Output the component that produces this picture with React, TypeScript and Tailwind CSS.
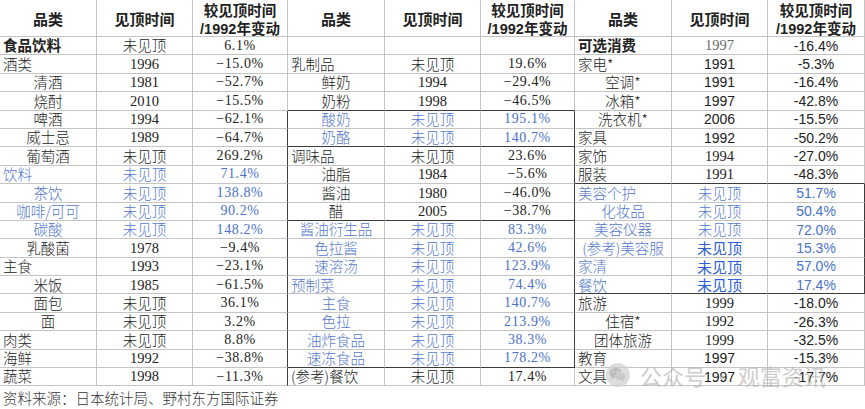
import React from "react";

type Row = {
  n: string;
  a: "l" | "c";
  y: string;
  p: string;
  b?: boolean; // blue
  bold?: boolean;
  yf?: "serif" | "sans" | "cjk" | "cjkbold" | "serifgray";
};

const M = "\u2212";

const g1: Row[] = [
  { n: "食品饮料", a: "l", y: "未见顶", p: "6.1%", bold: true },
  { n: "酒类", a: "l", y: "1996", p: M + "15.0%" },
  { n: "清酒", a: "c", y: "1981", p: M + "52.7%" },
  { n: "烧酎", a: "c", y: "2010", p: M + "15.5%" },
  { n: "啤酒", a: "c", y: "1994", p: M + "62.1%" },
  { n: "威士忌", a: "c", y: "1989", p: M + "64.7%" },
  { n: "葡萄酒", a: "c", y: "未见顶", p: "269.2%" },
  { n: "饮料", a: "l", y: "未见顶", p: "71.4%", b: true },
  { n: "茶饮", a: "c", y: "未见顶", p: "138.8%", b: true },
  { n: "咖啡/可可", a: "c", y: "未见顶", p: "90.2%", b: true },
  { n: "碳酸", a: "c", y: "未见顶", p: "148.2%", b: true },
  { n: "乳酸菌", a: "c", y: "1978", p: M + "9.4%" },
  { n: "主食", a: "l", y: "1993", p: M + "23.1%" },
  { n: "米饭", a: "c", y: "1985", p: M + "61.5%" },
  { n: "面包", a: "c", y: "未见顶", p: "36.1%" },
  { n: "面", a: "c", y: "未见顶", p: "3.2%" },
  { n: "肉类", a: "l", y: "未见顶", p: "8.8%" },
  { n: "海鲜", a: "l", y: "1992", p: M + "38.8%" },
  { n: "蔬菜", a: "l", y: "1998", p: M + "11.3%" },
];

const g2: Row[] = [
  { n: "", a: "l", y: "", p: "" },
  { n: "乳制品", a: "l", y: "未见顶", p: "19.6%" },
  { n: "鲜奶", a: "c", y: "1994", p: M + "29.4%" },
  { n: "奶粉", a: "c", y: "1998", p: M + "46.5%" },
  { n: "酸奶", a: "c", y: "未见顶", p: "195.1%", b: true },
  { n: "奶酪", a: "c", y: "未见顶", p: "140.7%", b: true },
  { n: "调味品", a: "l", y: "未见顶", p: "23.6%" },
  { n: "油脂", a: "c", y: "1984", p: M + "5.6%" },
  { n: "酱油", a: "c", y: "1980", p: M + "46.0%" },
  { n: "醋", a: "c", y: "2005", p: M + "38.7%" },
  { n: "酱油衍生品", a: "c", y: "未见顶", p: "83.3%", b: true },
  { n: "色拉酱", a: "c", y: "未见顶", p: "42.6%", b: true },
  { n: "速溶汤", a: "c", y: "未见顶", p: "123.9%", b: true },
  { n: "预制菜", a: "l", y: "未见顶", p: "74.4%", b: true },
  { n: "主食", a: "c", y: "未见顶", p: "140.7%", b: true },
  { n: "色拉", a: "c", y: "未见顶", p: "213.9%", b: true },
  { n: "油炸食品", a: "c", y: "未见顶", p: "38.3%", b: true },
  { n: "速冻食品", a: "c", y: "未见顶", p: "178.2%", b: true },
  { n: "(参考)餐饮", a: "l", y: "未见顶", p: "17.4%" },
];

const g3: Row[] = [
  { n: "可选消费", a: "l", y: "1997", p: "-16.4%", bold: true, yf: "serifgray" },
  { n: "家电*", a: "l", y: "1991", p: "-5.3%", yf: "sans" },
  { n: "空调*", a: "c", y: "1991", p: "-16.4%", yf: "sans" },
  { n: "冰箱*", a: "c", y: "1997", p: "-42.8%", yf: "sans" },
  { n: "洗衣机*", a: "c", y: "2006", p: "-15.5%", yf: "sans" },
  { n: "家具", a: "l", y: "1992", p: "-50.2%", yf: "sans" },
  { n: "家饰", a: "l", y: "1994", p: "-27.0%", yf: "serif" },
  { n: "服装", a: "l", y: "1991", p: "-48.3%", yf: "serif" },
  { n: "美容个护", a: "l", y: "未见顶", p: "51.7%", b: true, yf: "cjk" },
  { n: "化妆品", a: "c", y: "未见顶", p: "50.4%", b: true, yf: "cjk" },
  { n: "美容仪器", a: "c", y: "未见顶", p: "72.0%", b: true, yf: "cjk" },
  { n: "(参考)美容服", a: "c", y: "未见顶", p: "15.3%", b: true, yf: "cjkbold" },
  { n: "家清", a: "l", y: "未见顶", p: "57.0%", b: true, yf: "cjkbold" },
  { n: "餐饮", a: "l", y: "未见顶", p: "17.4%", b: true, yf: "cjkbold" },
  { n: "旅游", a: "l", y: "1999", p: "-18.0%", yf: "serif" },
  { n: "住宿*", a: "c", y: "1992", p: "-26.3%", yf: "serif" },
  { n: "团体旅游", a: "c", y: "1999", p: "-32.5%", yf: "serif" },
  { n: "教育", a: "l", y: "1997", p: "-15.3%", yf: "sans" },
  { n: "文具", a: "l", y: "1997", p: "-17.7%", yf: "sans" },
];

const groups = [g1, g2, g3];

const boxes: number[][][] = [
  [],
  [
    [4, 5],
    [10, 17],
  ],
  [[8, 13]],
];

function inBox(g: number, r: number) {
  return boxes[g].some(([a, b]) => r >= a && r <= b);
}

function rightDark(g: number, r: number) {
  if (g === 0) return r >= 4;
  if (g === 1) return r >= 4 && r <= 17;
  return r >= 8 && r <= 13;
}

function Cell({
  children,
  align,
  rd,
  bd,
  className,
}: {
  children?: React.ReactNode;
  align: "l" | "c";
  rd: boolean;
  bd: boolean;
  className?: string;
}) {
  return (
    <div
      className={[
        "flex items-center whitespace-nowrap leading-none border-r border-b",
        align === "l" ? "justify-start pl-[3px]" : "justify-center",
        rd ? "border-r-[#3c3c3c]" : "border-r-[#c4c4c4]",
        bd ? "border-b-[#3c3c3c]" : "border-b-[#c4c4c4]",
        className ?? "",
      ].join(" ")}
    >
      {children}
    </div>
  );
}

function Header() {
  return (
    <>
      <Cell align="c" rd={false} bd={false} className="font-bold text-[15px] pt-[1px]">
        品类
      </Cell>
      <Cell align="c" rd={false} bd={false} className="font-bold text-[15px] pt-[1px]">
        见顶时间
      </Cell>
      <Cell align="c" rd={false} bd={false} className="font-bold text-[14.5px]">
        <div className="flex flex-col items-center leading-[18px] pt-[2px]">
          <span>较见顶时间</span>
          <span>
            <span className="font-['Liberation_Sans',Arial,sans-serif]">/1992</span>年变动
          </span>
        </div>
      </Cell>
    </>
  );
}

const CJK = "font-['Noto_Sans_CJK_SC','Noto_Sans_CJK_JP',sans-serif]";

function yearClass(row: Row) {
  const color = row.b ? (row.yf === "cjkbold" ? "text-[#2f5fd2]" : "text-[#5478cc]") : "text-[#222]";
  if (row.yf === "cjkbold") return `${color} text-[15px] font-normal`;
  if (row.y === "未见顶") return `${color} text-[14.5px] font-light`;
  if (row.yf === "sans") return `${color} text-[14px] font-['Liberation_Sans',Arial,sans-serif]`;
  if (row.yf === "serifgray") return `text-[#6a6a6a] text-[14.5px] font-['Liberation_Serif',serif]`;
  return `${color} text-[14.5px] font-['Liberation_Serif',serif]`;
}

function pctClass(row: Row, g: number) {
  const color = row.b ? "text-[#4a72cc]" : "text-[#222]";
  if (g === 2) return `${color} text-[14px] font-['Liberation_Sans',Arial,sans-serif]`;
  return `${color} text-[14px] tracking-[0.6px] font-['Liberation_Serif',serif]`;
}

function WeChatIcon() {
  return (
    <svg width="24" height="24" viewBox="0 0 24 24">
      <circle cx="12" cy="12" r="12" fill="#cfcfcf" />
      <ellipse cx="9.6" cy="10" rx="6" ry="4.9" fill="#9e9e9e" />
      <path d="M5.6 13.6 L5 16.2 L8 14.6 Z" fill="#9e9e9e" />
      <ellipse cx="14.6" cy="13.6" rx="5" ry="4.1" fill="#b0b0b0" stroke="#cfcfcf" strokeWidth="0.8" />
      <path d="M17.6 16.6 L18.6 18.8 L15.8 17.4 Z" fill="#b0b0b0" />
      <circle cx="7.5" cy="8.8" r="0.8" fill="#e8e8e8" />
      <circle cx="11.5" cy="8.8" r="0.8" fill="#e8e8e8" />
      <circle cx="13" cy="12.8" r="0.65" fill="#e8e8e8" />
      <circle cx="16.3" cy="12.8" r="0.65" fill="#e8e8e8" />
    </svg>
  );
}

export default function App() {
  return (
    <div className={`relative w-[865px] h-[409px] overflow-hidden bg-white text-[#222] ${CJK}`}>
      <div className="grid grid-cols-[97px_96px_95px_97px_96px_94px_97px_96px_97px] grid-rows-[37px_repeat(19,18.4px)]">
        {groups.map((_, g) => (
          <Header key={"h" + g} />
        ))}
        {Array.from({ length: 19 }).map((_, r) =>
          groups.map((grp, g) => {
            const row = grp[r];
            const bd = inBox(g, r) !== inBox(g, r + 1);
            const nameColor = row.b ? "text-[#5478cc]" : "text-[#222]";
            return (
              <React.Fragment key={`${r}-${g}`}>
                <Cell
                  align={row.a}
                  rd={false}
                  bd={bd}
                  className={`${nameColor} text-[14.5px] ${row.bold ? "font-bold" : "font-light"}`}
                >
                  {row.n}
                </Cell>
                <Cell align="c" rd={false} bd={bd} className={yearClass(row)}>
                  {row.y}
                </Cell>
                <Cell align="c" rd={rightDark(g, r)} bd={bd} className={pctClass(row, g)}>
                  {row.p}
                </Cell>
              </React.Fragment>
            );
          })
        )}
      </div>
      <div className="pl-[3px] pt-[5px] text-[14.5px] font-light text-[#333] leading-none">
        资料来源：日本统计局、野村东方国际证券
      </div>
      <div className="absolute left-[606px] top-[363px] flex items-center gap-[10px] opacity-70 pointer-events-none">
        <WeChatIcon />
        <span className="text-[22px] text-[#b8b8b8] whitespace-nowrap leading-none">
          公众号 · 观富资讯
        </span>
      </div>
    </div>
  );
}
